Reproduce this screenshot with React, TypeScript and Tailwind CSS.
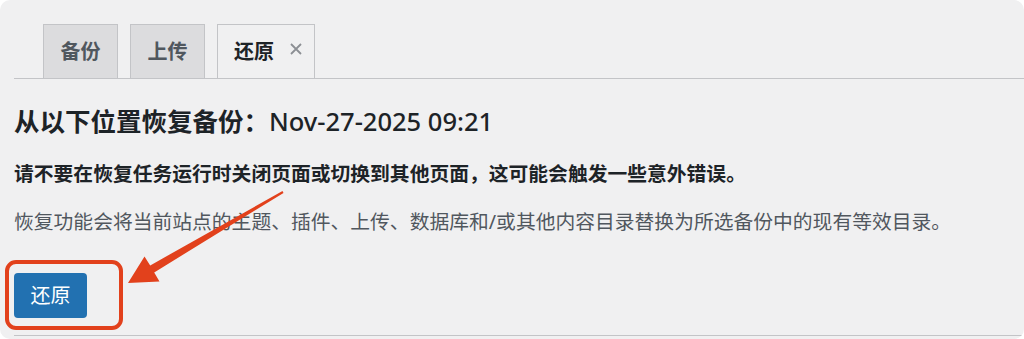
import React from "react";

const font = { fontFamily: '"Noto Sans", "Noto Sans CJK SC", sans-serif' };

function Tab({ label, active }: { label: string; active?: boolean }) {
  if (active) {
    return (
      <div className="-mb-px flex h-[54px] w-[98px] items-center border border-b-0 border-[#c3c4c7] bg-[#f0f0f1] pl-[16px] text-[20px] font-bold text-[#1d2327]">
        <span>{label}</span>
        <svg width="14" height="14" viewBox="0 0 14 14" className="ml-[15px] -mt-[6px]">
          <path d="M2 2 L12 12 M12 2 L2 12" stroke="#8c8f94" strokeWidth="1.8" />
        </svg>
      </div>
    );
  }
  return (
    <div className="flex h-[54px] w-[75px] items-center justify-center border border-b-0 border-[#c3c4c7] bg-[#dcdcde] text-[20px] font-bold text-[#50575e]">
      {label}
    </div>
  );
}

export default function App() {
  return (
    <div className="bg-white">
      <div
        className="relative h-[339px] w-[1024px] overflow-hidden rounded-[10px] bg-[#f0f0f1]"
        style={font}
      >
        {/* tabs */}
        <div className="pt-[24px] pl-[14px]">
          <div className="flex gap-[12px] border-b border-[#c3c4c7] pl-[29px]">
            <Tab label="备份" />
            <Tab label="上传" />
            <Tab label="还原" active />
          </div>
        </div>

        <div className="pl-[14px]">
          <h2 className="mt-[26px] text-[25.5px] leading-[32px] font-bold text-[#1d2327]">
            从以下位置恢复备份：<span className="font-medium">Nov-27-2025 09:21</span>
          </h2>
          <p className="mt-[23px] text-[19.8px] leading-[28px] font-bold text-[#1d2327]">
            请不要在恢复任务运行时关闭页面或切换到其他页面，这可能会触发一些意外错误。
          </p>
          <p className="mt-[20px] text-[19.8px] leading-[28px] text-[#50575e]">
            恢复功能会将当前站点的主题、插件、上传、数据库和/或其他内容目录替换为所选备份中的现有等效目录。
          </p>
          <button className="mt-[37px] flex h-[45px] w-[73px] items-center justify-center rounded-[4px] bg-[#2271b1] text-[20px] text-white">
            还原
          </button>
          <div className="mt-[17px] border-t border-[#c3c4c7]" />
        </div>

        {/* annotation overlay */}
        <svg
          className="pointer-events-none absolute inset-0"
          width="1024"
          height="339"
          viewBox="0 0 1024 339"
        >
          <rect x="7" y="262" width="114" height="66" rx="9" fill="none" stroke="#e2411c" strokeWidth="4" />
          <polygon
            points="282.5,191.1 150.2,265.4 144.5,256.6 128,283 159.5,281.5 154.2,272.4 283.5,192.9"
            fill="#e2411c"
          />
        </svg>
      </div>
    </div>
  );
}
